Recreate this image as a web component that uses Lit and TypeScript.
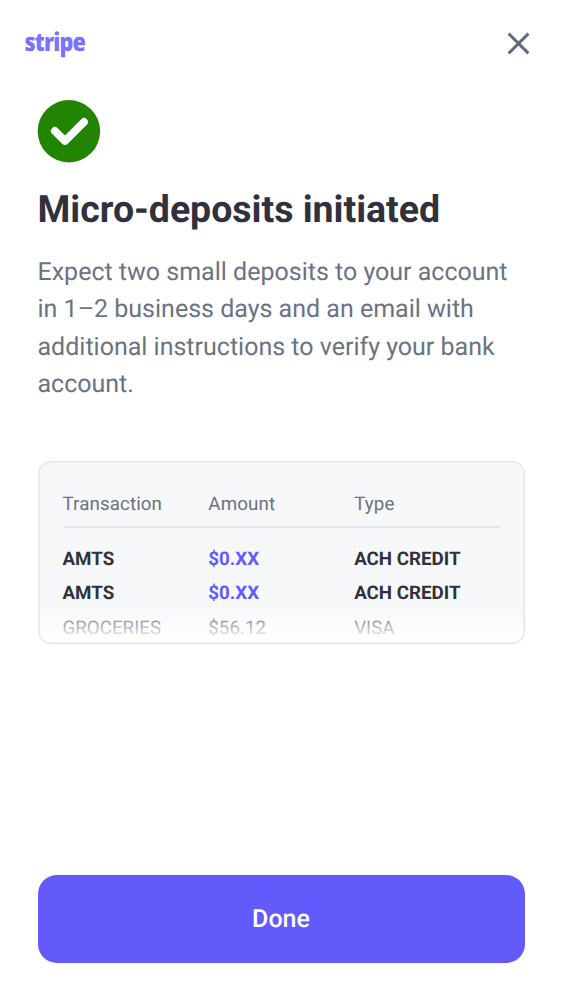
import { LitElement, html, css } from "lit";
import { customElement } from "lit/decorators.js";

interface Row {
  name: string;
  amount: string;
  type: string;
  highlight: boolean;
}

const ROWS: Row[] = [
  { name: "AMTS", amount: "$0.XX", type: "ACH CREDIT", highlight: true },
  { name: "AMTS", amount: "$0.XX", type: "ACH CREDIT", highlight: true },
  { name: "GROCERIES", amount: "$56.12", type: "VISA", highlight: false },
];

@customElement("transaction-preview")
class TransactionPreview extends LitElement {
  static styles = css`
    :host {
      display: block;
      box-sizing: border-box;
      position: relative;
      height: 183px;
      padding: 28px 24.5px 0 25px;
      border-radius: 12.5px;
      background: #f6f8fa;
      overflow: hidden;
      font-size: 18.75px;
      line-height: 30px;
    }
    .row {
      display: grid;
      grid-template-columns: repeat(3, 1fr);
      height: 34.3px;
      align-items: center;
      color: #50515b;
    }
    .head {
      height: 37.5px;
      align-items: start;
      color: #6a7383;
      letter-spacing: 0.1px;
    }
    .rule {
      height: 1.5px;
      margin-bottom: 13.8px;
      background: linear-gradient(#e0e6eb, #e0e6eb);
    }
    .strong {
      color: #30313d;
      font-weight: 700;
    }
    .strong .amount {
      color: #625afa;
    }
    .fade {
      position: absolute;
      inset: auto 0 0 0;
      height: 37px;
      background: linear-gradient(rgba(255, 255, 255, 0), #ffffff 90%);
    }
    .outline {
      position: absolute;
      inset: 0;
      border-radius: inherit;
      box-shadow: inset 0 0 0 1.5px #e0e6eb;
    }
  `;

  render() {
    return html`
      <div class="row head">
        <span>Transaction</span><span>Amount</span><span>Type</span>
      </div>
      <div class="rule"></div>
      ${ROWS.map(
        (r) => html`<div class="row ${r.highlight ? "strong" : ""}">
          <span>${r.name}</span><span class="amount">${r.amount}</span
          ><span>${r.type}</span>
        </div>`
      )}
      <div class="fade"></div>
      <div class="outline"></div>
    `;
  }
}

@customElement("app-root")
class AppRoot extends LitElement {
  static styles = css`
    :host {
      display: flex;
      flex-direction: column;
      box-sizing: border-box;
      height: 1000px;
      background: #ffffff;
      font-family: Roboto, sans-serif;
      color: #30313d;
      text-rendering: geometricPrecision;
    }
    header {
      display: flex;
      justify-content: space-between;
      align-items: center;
      height: 87.5px;
      padding: 0 31px 0 24px;
      box-sizing: border-box;
    }
    svg {
      display: block;
    }
    .brand {
      font-family: "Open Sans", sans-serif;
      font-weight: 800;
      font-size: 25.5px;
      letter-spacing: -1px;
      fill: #7a73ff;
    }
    .close {
      padding: 0;
      border: 0;
      background: none;
    }
    main {
      flex: 1;
      padding: 12.5px 37.5px 0;
    }
    h1 {
      margin: 22px 0 0;
      font-size: 37.5px;
      line-height: 50px;
      font-weight: 700;
      letter-spacing: -0.02px;
      white-space: nowrap;
    }
    p {
      margin: 19.3px 0 57.2px;
      font-size: 25px;
      line-height: 37.5px;
      color: #6a7383;
    }
    footer {
      padding: 0 37.5px 37.5px;
    }
    .done {
      display: block;
      width: 100%;
      height: 87.5px;
      padding: 2px 0 0;
      border: 0;
      border-radius: 19px;
      background: #625afa;
      color: #ffffff;
      font: 500 25px Roboto, sans-serif;
      text-rendering: inherit;
    }
  `;

  render() {
    return html`
      <header>
        <svg width="64" height="36" viewBox="0 0 64 36" overflow="visible">
          <text
            class="brand"
            x="0.5"
            y="25.3"
            textLength="60.5"
            lengthAdjust="spacingAndGlyphs"
          >stripe</text>
        </svg>
        <button class="close" aria-label="Close">
          <svg width="25" height="25" viewBox="0 0 25 25" fill="none" stroke="#5e6b7e" stroke-width="2.9">
            <path d="M2.6 2.6 22.4 22.4M22.4 2.6 2.6 22.4" />
          </svg>
        </button>
      </header>
      <main>
        <svg width="62.5" height="62.5" viewBox="0 0 62.5 62.5" fill="none" overflow="visible">
          <circle cx="30.9" cy="31.25" r="31.25" fill="#228403" />
          <path
            d="M16.9 30.9 27 40.9 46 21.9"
            stroke="#fff"
            stroke-width="7.8"
            stroke-linecap="round"
            stroke-linejoin="round"
          />
        </svg>
        <h1>Micro-deposits initiated</h1>
        <p>
          Expect two small deposits to your account in 1–2 business days and an
          email with additional instructions to verify your bank account.
        </p>
        <transaction-preview></transaction-preview>
      </main>
      <footer><button class="done">Done</button></footer>
    `;
  }
}
